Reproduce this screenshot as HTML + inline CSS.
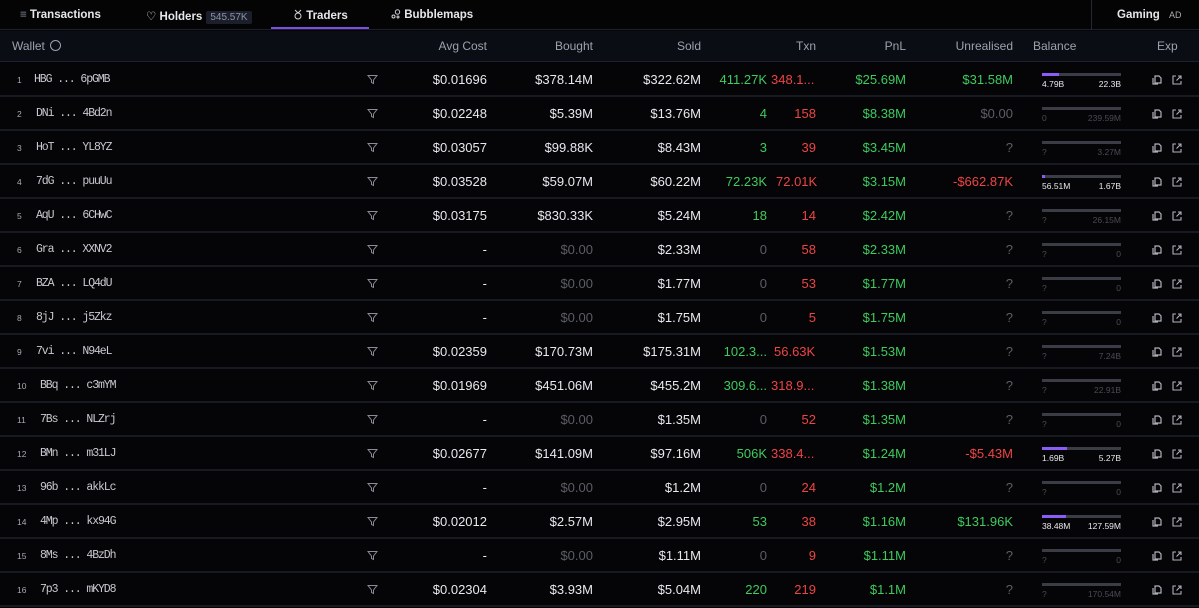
<!DOCTYPE html>
<html><head><meta charset="utf-8"><style>
*{margin:0;padding:0;box-sizing:border-box}
body{width:1199px;height:608px;background:#050507;overflow:hidden;font-family:"Liberation Sans",sans-serif;color:#e8e9ee;position:relative}
.tabs{position:absolute;left:0;top:0;width:1199px;height:30px;background:#040405;border-bottom:1px solid #1d2030}
.tab{position:absolute;top:9px;font-size:11.5px;font-weight:bold;color:#e6e7ec}
.badge{display:inline-block;background:#1b1f2c;color:#8d93a5;font-weight:normal;font-size:10px;padding:1px 4px;margin-left:4px;border-radius:2px}
.ul{position:absolute;left:271px;top:27px;width:98px;height:2px;background:#7b4fe0}
.vsep{position:absolute;left:1091px;top:0;width:1px;height:30px;background:#262836}
.head{position:absolute;left:0;top:31px;width:1199px;height:31px;background:#0b0d15;border-bottom:1px solid #1d2030;font-size:12px;color:#9ea1ad}
.head span{position:absolute;top:8px}
.row{position:absolute;left:0;width:1199px;height:34px;border-bottom:2px solid #181a21;font-size:13px}
.row>*{position:absolute;top:9px;white-space:nowrap}
.rk{left:17px;top:12px!important;font-size:8.5px;color:#a8aab3}
.w{top:10px!important;font-family:"Liberation Mono",monospace;font-size:11.5px;letter-spacing:-1.1px;color:#c9cad1}
.f{left:367px;top:11px!important;width:11px;height:11px}
.a{right:712px}.b{right:606px}.s{right:498px}.tb{right:432px;color:#3ecb5e}.ts{color:#ef4444}.p{right:293px;color:#3ecb5e}.u{right:186px}
.g{color:#3ecb5e}.r{color:#ef4444}.d{color:#5c5e66}.q{color:#5c5e66}
.bar{left:1042px;top:10px!important;width:79px;height:3px;background:#3a3c46}
.bar i{position:absolute;left:0;top:0;height:3px;background:#8b5cf6}
.l1{left:1042px;top:16px!important;font-size:8.5px;color:#e8e9ee}
.l2{right:78px;top:16px!important;font-size:8.5px;color:#e8e9ee}
.dm{color:#4a4c55!important}
.ic{top:12px!important}
</style></head><body>
<div class="tabs">
<div class="tab" style="left:20px"><span style="color:#8d93a5;font-weight:normal">≡</span> Transactions</div>
<div class="tab" style="left:146px"><span style="font-weight:normal">♡</span> Holders<span class="badge">545.57K</span></div>
<div class="tab" style="left:293px"><svg width="10" height="11" viewBox="0 0 10 11" style="vertical-align:-1px"><path d="M2 1l3 3 3-3 M5 10a3 3 0 1 0 0-6 3 3 0 1 0 0 6" fill="none" stroke="#d0d2d8" stroke-width="1"/></svg> Traders</div>
<div class="tab" style="left:391px"><svg width="10" height="10" viewBox="0 0 10 10" style="vertical-align:-1px"><circle cx="6.5" cy="3" r="2.2" fill="none" stroke="#d0d2d8"/><circle cx="2.5" cy="7.5" r="1.5" fill="none" stroke="#d0d2d8"/><circle cx="7" cy="8" r="1" fill="none" stroke="#d0d2d8"/></svg> Bubblemaps</div>
<div class="ul"></div><div class="vsep"></div>
<div class="tab" style="left:1117px">Gaming <span style="font-size:9px;font-weight:normal;color:#aaa;margin-left:6px">AD</span></div>
</div>
<div class="head">
<span style="left:12px">Wallet <span style="position:relative;display:inline-block;width:11px;height:11px;border:1px solid #9ea1ad;border-radius:50%;vertical-align:-1px;margin-left:2px;top:0"></span></span>
<span style="right:712px">Avg Cost</span><span style="right:606px">Bought</span><span style="right:498px">Sold</span><span style="right:383px">Txn</span><span style="right:293px">PnL</span><span style="right:186px">Unrealised</span><span style="left:1033px">Balance</span><span style="left:1157px">Exp</span>
</div>

<svg width="0" height="0" style="position:absolute"><defs>
<symbol id="fl" viewBox="0 0 11 11"><path d="M1 1.5h9L6.5 6v3.5L4.5 8.5V6z" fill="none" stroke="#8a8c95" stroke-width="1"/></symbol>
<symbol id="cp" viewBox="0 0 10 10"><path d="M3 1h4l2 2v5H3z M1 3v6h5" fill="none" stroke="#b0b2ba" stroke-width="1.2"/></symbol>
<symbol id="ex" viewBox="0 0 10 10"><path d="M4 1H1v8h8V6 M6 1h3v3 M9 1L4.5 5.5" fill="none" stroke="#b0b2ba" stroke-width="1.1"/></symbol>
</defs></svg>

<div class="row" style="top:63px"><span class="rk">1</span><span class="w" style="left:34px">HBG ... 6pGMB</span><svg class="f"><use href="#fl"/></svg><span class="a">$0.01696</span><span class="b">$378.14M</span><span class="s">$322.62M</span><span class="tb">411.27K</span><span class="ts" style="left:771px">348.1...</span><span class="p">$25.69M</span><span class="u g">$31.58M</span><span class="bar"><i style="width:17px"></i></span><span class="l1">4.79B</span><span class="l2">22.3B</span><svg class="ic" style="left:1152px" width="10" height="10"><use href="#cp"/></svg><svg class="ic" style="left:1172px" width="10" height="10"><use href="#ex"/></svg></div>

<div class="row" style="top:97px"><span class="rk">2</span><span class="w" style="left:36px">DNi ... 4Bd2n</span><svg class="f"><use href="#fl"/></svg><span class="a">$0.02248</span><span class="b">$5.39M</span><span class="s">$13.76M</span><span class="tb">4</span><span class="ts" style="right:383px">158</span><span class="p">$8.38M</span><span class="u d">$0.00</span><span class="bar"></span><span class="l1 dm">0</span><span class="l2 dm">239.59M</span><svg class="ic" style="left:1152px" width="10" height="10"><use href="#cp"/></svg><svg class="ic" style="left:1172px" width="10" height="10"><use href="#ex"/></svg></div>

<div class="row" style="top:131px"><span class="rk">3</span><span class="w" style="left:36px">HoT ... YL8YZ</span><svg class="f"><use href="#fl"/></svg><span class="a">$0.03057</span><span class="b">$99.88K</span><span class="s">$8.43M</span><span class="tb">3</span><span class="ts" style="right:383px">39</span><span class="p">$3.45M</span><span class="u q">?</span><span class="bar"></span><span class="l1 dm">?</span><span class="l2 dm">3.27M</span><svg class="ic" style="left:1152px" width="10" height="10"><use href="#cp"/></svg><svg class="ic" style="left:1172px" width="10" height="10"><use href="#ex"/></svg></div>

<div class="row" style="top:165px"><span class="rk">4</span><span class="w" style="left:36px">7dG ... puuUu</span><svg class="f"><use href="#fl"/></svg><span class="a">$0.03528</span><span class="b">$59.07M</span><span class="s">$60.22M</span><span class="tb">72.23K</span><span class="ts" style="left:776px">72.01K</span><span class="p">$3.15M</span><span class="u r">-$662.87K</span><span class="bar"><i style="width:3px"></i></span><span class="l1">56.51M</span><span class="l2">1.67B</span><svg class="ic" style="left:1152px" width="10" height="10"><use href="#cp"/></svg><svg class="ic" style="left:1172px" width="10" height="10"><use href="#ex"/></svg></div>

<div class="row" style="top:199px"><span class="rk">5</span><span class="w" style="left:36px">AqU ... 6CHwC</span><svg class="f"><use href="#fl"/></svg><span class="a">$0.03175</span><span class="b">$830.33K</span><span class="s">$5.24M</span><span class="tb">18</span><span class="ts" style="right:383px">14</span><span class="p">$2.42M</span><span class="u q">?</span><span class="bar"></span><span class="l1 dm">?</span><span class="l2 dm">26.15M</span><svg class="ic" style="left:1152px" width="10" height="10"><use href="#cp"/></svg><svg class="ic" style="left:1172px" width="10" height="10"><use href="#ex"/></svg></div>

<div class="row" style="top:233px"><span class="rk">6</span><span class="w" style="left:36px">Gra ... XXNV2</span><svg class="f"><use href="#fl"/></svg><span class="a">-</span><span class="b d">$0.00</span><span class="s">$2.33M</span><span class="tb d">0</span><span class="ts" style="right:383px">58</span><span class="p">$2.33M</span><span class="u q">?</span><span class="bar"></span><span class="l1 dm">?</span><span class="l2 dm">0</span><svg class="ic" style="left:1152px" width="10" height="10"><use href="#cp"/></svg><svg class="ic" style="left:1172px" width="10" height="10"><use href="#ex"/></svg></div>

<div class="row" style="top:267px"><span class="rk">7</span><span class="w" style="left:36px">BZA ... LQ4dU</span><svg class="f"><use href="#fl"/></svg><span class="a">-</span><span class="b d">$0.00</span><span class="s">$1.77M</span><span class="tb d">0</span><span class="ts" style="right:383px">53</span><span class="p">$1.77M</span><span class="u q">?</span><span class="bar"></span><span class="l1 dm">?</span><span class="l2 dm">0</span><svg class="ic" style="left:1152px" width="10" height="10"><use href="#cp"/></svg><svg class="ic" style="left:1172px" width="10" height="10"><use href="#ex"/></svg></div>

<div class="row" style="top:301px"><span class="rk">8</span><span class="w" style="left:36px">8jJ ... j5Zkz</span><svg class="f"><use href="#fl"/></svg><span class="a">-</span><span class="b d">$0.00</span><span class="s">$1.75M</span><span class="tb d">0</span><span class="ts" style="right:383px">5</span><span class="p">$1.75M</span><span class="u q">?</span><span class="bar"></span><span class="l1 dm">?</span><span class="l2 dm">0</span><svg class="ic" style="left:1152px" width="10" height="10"><use href="#cp"/></svg><svg class="ic" style="left:1172px" width="10" height="10"><use href="#ex"/></svg></div>

<div class="row" style="top:335px"><span class="rk">9</span><span class="w" style="left:36px">7vi ... N94eL</span><svg class="f"><use href="#fl"/></svg><span class="a">$0.02359</span><span class="b">$170.73M</span><span class="s">$175.31M</span><span class="tb">102.3...</span><span class="ts" style="left:774px">56.63K</span><span class="p">$1.53M</span><span class="u q">?</span><span class="bar"></span><span class="l1 dm">?</span><span class="l2 dm">7.24B</span><svg class="ic" style="left:1152px" width="10" height="10"><use href="#cp"/></svg><svg class="ic" style="left:1172px" width="10" height="10"><use href="#ex"/></svg></div>

<div class="row" style="top:369px"><span class="rk">10</span><span class="w" style="left:40px">BBq ... c3mYM</span><svg class="f"><use href="#fl"/></svg><span class="a">$0.01969</span><span class="b">$451.06M</span><span class="s">$455.2M</span><span class="tb">309.6...</span><span class="ts" style="left:771px">318.9...</span><span class="p">$1.38M</span><span class="u q">?</span><span class="bar"></span><span class="l1 dm">?</span><span class="l2 dm">22.91B</span><svg class="ic" style="left:1152px" width="10" height="10"><use href="#cp"/></svg><svg class="ic" style="left:1172px" width="10" height="10"><use href="#ex"/></svg></div>

<div class="row" style="top:403px"><span class="rk">11</span><span class="w" style="left:40px">7Bs ... NLZrj</span><svg class="f"><use href="#fl"/></svg><span class="a">-</span><span class="b d">$0.00</span><span class="s">$1.35M</span><span class="tb d">0</span><span class="ts" style="right:383px">52</span><span class="p">$1.35M</span><span class="u q">?</span><span class="bar"></span><span class="l1 dm">?</span><span class="l2 dm">0</span><svg class="ic" style="left:1152px" width="10" height="10"><use href="#cp"/></svg><svg class="ic" style="left:1172px" width="10" height="10"><use href="#ex"/></svg></div>

<div class="row" style="top:437px"><span class="rk">12</span><span class="w" style="left:40px">BMn ... m31LJ</span><svg class="f"><use href="#fl"/></svg><span class="a">$0.02677</span><span class="b">$141.09M</span><span class="s">$97.16M</span><span class="tb">506K</span><span class="ts" style="left:771px">338.4...</span><span class="p">$1.24M</span><span class="u r">-$5.43M</span><span class="bar"><i style="width:25px"></i></span><span class="l1">1.69B</span><span class="l2">5.27B</span><svg class="ic" style="left:1152px" width="10" height="10"><use href="#cp"/></svg><svg class="ic" style="left:1172px" width="10" height="10"><use href="#ex"/></svg></div>

<div class="row" style="top:471px"><span class="rk">13</span><span class="w" style="left:40px">96b ... akkLc</span><svg class="f"><use href="#fl"/></svg><span class="a">-</span><span class="b d">$0.00</span><span class="s">$1.2M</span><span class="tb d">0</span><span class="ts" style="right:383px">24</span><span class="p">$1.2M</span><span class="u q">?</span><span class="bar"></span><span class="l1 dm">?</span><span class="l2 dm">0</span><svg class="ic" style="left:1152px" width="10" height="10"><use href="#cp"/></svg><svg class="ic" style="left:1172px" width="10" height="10"><use href="#ex"/></svg></div>

<div class="row" style="top:505px"><span class="rk">14</span><span class="w" style="left:40px">4Mp ... kx94G</span><svg class="f"><use href="#fl"/></svg><span class="a">$0.02012</span><span class="b">$2.57M</span><span class="s">$2.95M</span><span class="tb">53</span><span class="ts" style="right:383px">38</span><span class="p">$1.16M</span><span class="u g">$131.96K</span><span class="bar"><i style="width:24px"></i></span><span class="l1">38.48M</span><span class="l2">127.59M</span><svg class="ic" style="left:1152px" width="10" height="10"><use href="#cp"/></svg><svg class="ic" style="left:1172px" width="10" height="10"><use href="#ex"/></svg></div>

<div class="row" style="top:539px"><span class="rk">15</span><span class="w" style="left:40px">8Ms ... 4BzDh</span><svg class="f"><use href="#fl"/></svg><span class="a">-</span><span class="b d">$0.00</span><span class="s">$1.11M</span><span class="tb d">0</span><span class="ts" style="right:383px">9</span><span class="p">$1.11M</span><span class="u q">?</span><span class="bar"></span><span class="l1 dm">?</span><span class="l2 dm">0</span><svg class="ic" style="left:1152px" width="10" height="10"><use href="#cp"/></svg><svg class="ic" style="left:1172px" width="10" height="10"><use href="#ex"/></svg></div>

<div class="row" style="top:573px"><span class="rk">16</span><span class="w" style="left:40px">7p3 ... mKYD8</span><svg class="f"><use href="#fl"/></svg><span class="a">$0.02304</span><span class="b">$3.93M</span><span class="s">$5.04M</span><span class="tb">220</span><span class="ts" style="right:383px">219</span><span class="p">$1.1M</span><span class="u q">?</span><span class="bar"></span><span class="l1 dm">?</span><span class="l2 dm">170.54M</span><svg class="ic" style="left:1152px" width="10" height="10"><use href="#cp"/></svg><svg class="ic" style="left:1172px" width="10" height="10"><use href="#ex"/></svg></div>
</body></html>
